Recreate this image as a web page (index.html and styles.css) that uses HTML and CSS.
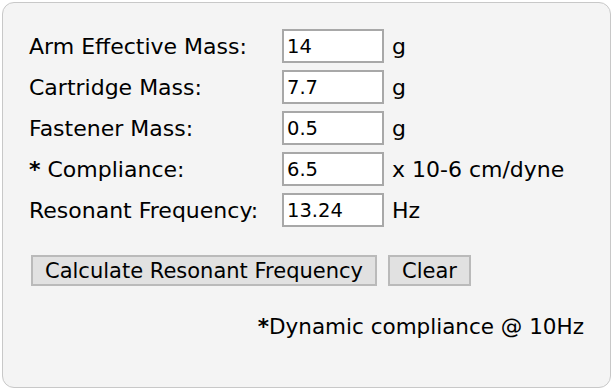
FILE: index.html
```html
<!DOCTYPE html>
<html lang="en">
<head>
  <meta charset="UTF-8" />
  <title>Tonearm Resonance Calculator</title>
  <link rel="stylesheet" href="styles.css">
</head>
<body>
  <div class="calc">
    <div class="fields">
      <label for="arm">Arm Effective Mass:</label>
      <input id="arm" value="14" />
      <span class="unit">g</span>

      <label for="cart">Cartridge Mass:</label>
      <input id="cart" value="7.7" />
      <span class="unit">g</span>

      <label for="fast">Fastener Mass:</label>
      <input id="fast" value="0.5" />
      <span class="unit">g</span>

      <label for="comp"><b>*</b> Compliance:</label>
      <input id="comp" value="6.5" />
      <span class="unit">x 10-6 cm/dyne</span>

      <label for="freq">Resonant Frequency:</label>
      <input id="freq" value="13.24" />
      <span class="unit">Hz</span>
    </div>

    <div class="actions">
      <button onclick="calculate()">Calculate Resonant Frequency</button>
      <button onclick="clearAll()">Clear</button>
    </div>

    <p class="note"><b>*</b>Dynamic compliance @ 10Hz</p>
  </div>

  <script>
    function calculate() {
      const m = ['arm', 'cart', 'fast'].reduce((s, id) => s + parseFloat(document.getElementById(id).value || 0), 0);
      const c = parseFloat(document.getElementById('comp').value);
      if (!m || !c) return;
      const f = 1000 / (2 * Math.PI * Math.sqrt(m * c));
      document.getElementById('freq').value = f.toFixed(2);
    }

    function clearAll() {
      document.querySelectorAll('.fields input').forEach(i => i.value = '');
    }
  </script>
</body>
</html>
```

FILE: styles.css
```css
body {
  margin: 0;
  background: #fff;
  font-family: "DejaVu Sans", Verdana, sans-serif;
  color: #000;
}

.calc {
  margin: 2px;
  width: 555px;
  height: 334px;
  padding: 26px 26px 24px 26px;
  background: #f4f4f4;
  border: 1px solid #c8c8c8;
  border-radius: 12px;
}

.fields {
  display: grid;
  grid-template-columns: 253px 102px auto;
  grid-auto-rows: 34px;
  row-gap: 7px;
  align-items: center;
  font-size: 22px;
}

.fields input {
  box-sizing: border-box;
  width: 102px;
  height: 34px;
  padding: 0 3px;
  border: 2px solid #a8a8a8;
  background: #fff;
  font-family: inherit;
  font-size: 19.5px;
  color: #000;
  outline: none;
}

.unit {
  margin-left: 8px;
}

.actions {
  display: flex;
  gap: 11px;
  margin: 28px 0 0 2px;
}

button {
  height: 31px;
  padding: 0 12px;
  background: #e1e1e1;
  border: 2px solid #bababa;
  font-family: inherit;
  font-size: 21px;
  color: #000;
  cursor: pointer;
}

.note {
  margin: 28px 0 0;
  text-align: right;
  font-size: 21.5px;
}
```
